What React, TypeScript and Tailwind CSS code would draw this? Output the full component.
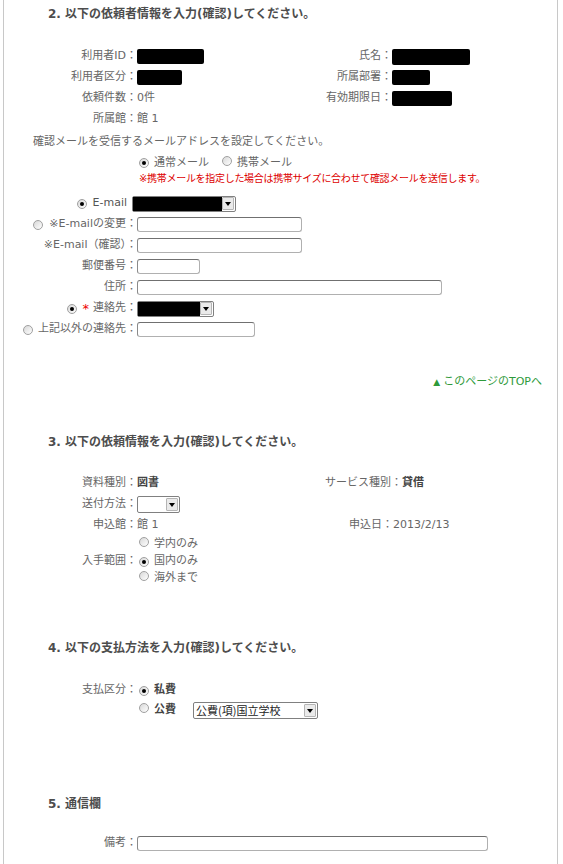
import React from "react";

const font = "font-['DejaVu_Sans','Noto_Sans_CJK_JP',sans-serif]";

function Radio({ checked = false }: { checked?: boolean }) {
  return (
    <span className="inline-flex w-[10px] h-[10px] shrink-0 items-center justify-center rounded-full border border-[#a0a0a0] bg-gradient-to-br from-[#d8d8d8] to-white">
      {checked && <span className="w-[4px] h-[4px] rounded-full bg-black" />}
    </span>
  );
}

function Arrow() {
  return (
    <span className="flex w-[12px] h-[13px] shrink-0 items-center justify-center border border-[#b5b5b5] bg-[#eaeaea] rounded-[1px] mr-[1px]">
      <span className="w-0 h-0 border-l-[3.5px] border-r-[3.5px] border-t-[4px] border-l-transparent border-r-transparent border-t-black" />
    </span>
  );
}

// redacted select: black value area + dropdown button
function BlackSelect({ w, black }: { w: string; black: string }) {
  return (
    <div className={`flex items-center h-[16px] ${w} border border-[#808080] rounded-[2px] bg-white`}>
      <div className={`h-full ${black} bg-black`} />
      <div className="flex-1" />
      <Arrow />
    </div>
  );
}

function Select({ w, text = "" }: { w: string; text?: string }) {
  return (
    <div className={`flex items-center h-[17px] ${w} border border-[#808080] rounded-[2px] bg-white`}>
      <span className="flex-1 pl-[2px] text-[11px] leading-[15px] text-[#222] font-['Noto_Sans_CJK_JP',sans-serif] whitespace-nowrap">
        {text}
      </span>
      <Arrow />
    </div>
  );
}

function TextBox({ w }: { w: string }) {
  return (
    <input
      type="text"
      className={`h-[15px] ${w} border border-[#b0b0b0] border-t-[#707070] border-l-[#8a8a8a] rounded-[3px] bg-white outline-none`}
    />
  );
}

function Black({ w, h = "h-[15px]" }: { w: string; h?: string }) {
  return <div className={`${w} ${h} bg-black rounded-[2px]`} />;
}

function Heading({ children, className = "" }: { children: React.ReactNode; className?: string }) {
  return (
    <div className={`pl-[44px] h-[18px] leading-[18px] text-[12px] font-bold text-[#4d4d4d] ${className}`}>
      {children}
    </div>
  );
}

function Label({ children, w = "w-[133px]" }: { children: React.ReactNode; w?: string }) {
  return <div className={`${w} shrink-0 flex items-center justify-end gap-[4px] whitespace-nowrap`}>{children}</div>;
}

export default function App() {
  return (
    <div className={`${font} text-[11px] text-[#666] bg-white min-h-screen`}>
      <div className="ml-[3px] w-[555px] min-h-[900px] border-x border-[#c8c8c8] pt-[5px] pb-[40px]">
        {/* 2. 依頼者情報 */}
        <Heading>2. 以下の依頼者情報を入力(確認)してください。</Heading>

        <div className="mt-[23px]">
          <div className="flex items-center h-[21px]">
            <Label>利用者ID：</Label>
            <div className="w-[113px]"><Black w="w-[67px]" /></div>
            <Label w="w-[142px]">氏名：</Label>
            <Black w="w-[78px]" h="h-[16px]" />
          </div>
          <div className="flex items-center h-[21px]">
            <Label>利用者区分：</Label>
            <div className="w-[113px]"><Black w="w-[45px]" /></div>
            <Label w="w-[142px]">所属部署：</Label>
            <Black w="w-[38px]" />
          </div>
          <div className="flex items-center h-[21px]">
            <Label>依頼件数：</Label>
            <div className="w-[113px]">0件</div>
            <Label w="w-[142px]">有効期限日：</Label>
            <Black w="w-[60px]" />
          </div>
          <div className="flex items-center h-[21px]">
            <Label>所属館：</Label>
            <div>館 1</div>
          </div>
        </div>

        <div className="mt-[4px] pl-[29px] h-[16px] leading-[16px]">確認メールを受信するメールアドレスを設定してください。</div>
        <div className="mt-[5px] pl-[135px] h-[16px] flex items-center">
          <Radio checked />
          <span className="ml-[5px]">通常メール</span>
          <span className="ml-[13px]"><Radio /></span>
          <span className="ml-[5px]">携帯メール</span>
        </div>
        <div className="pl-[135px] h-[16px] leading-[16px] text-[10px] text-[#dd0000] tracking-[-0.3px]">
          ※携帯メールを指定した場合は携帯サイズに合わせて確認メールを送信します。
        </div>

        <div className="mt-[6px]">
          <div className="flex items-center h-[21px]">
            <Label w="w-[123px]">
              <Radio checked />
              <span className="ml-[2px] text-[#555]">E-mail</span>
            </Label>
            <div className="ml-[5px]"><BlackSelect w="w-[104px]" black="w-[90px]" /></div>
          </div>
          <div className="flex items-center h-[21px]">
            <Label>
              <Radio />
              <span className="ml-[2px]">※E-mailの変更：</span>
            </Label>
            <TextBox w="w-[165px]" />
          </div>
          <div className="flex items-center h-[21px]">
            <Label>※E-mail（確認）：</Label>
            <TextBox w="w-[165px]" />
          </div>
          <div className="flex items-center h-[21px]">
            <Label>郵便番号：</Label>
            <TextBox w="w-[63px]" />
          </div>
          <div className="flex items-center h-[21px]">
            <Label>住所：</Label>
            <TextBox w="w-[305px]" />
          </div>
          <div className="flex items-center h-[21px]">
            <Label>
              <Radio checked />
              <span className="ml-[2px] text-[#ee0000] text-[13px] leading-none">*</span>
              <span>連絡先：</span>
            </Label>
            <BlackSelect w="w-[77px]" black="w-[63px]" />
          </div>
          <div className="flex items-center h-[21px]">
            <Label>
              <Radio />
              <span className="ml-[1px]">上記以外の連絡先：</span>
            </Label>
            <TextBox w="w-[118px]" />
          </div>
        </div>

        <div className="mt-[34px] h-[16px] leading-[16px] flex justify-end pr-[15px] text-[#2e9a3a]">
          <span className="text-[9px] mr-[3px]">▲</span>
          <span>このページのTOPへ</span>
        </div>

        {/* 3. 依頼情報 */}
        <Heading className="mt-[43px]">3. 以下の依頼情報を入力(確認)してください。</Heading>
        <div className="mt-[22px]">
          <div className="flex items-center h-[21px]">
            <Label>資料種別：</Label>
            <div className="w-[113px] font-bold text-[#444]">図書</div>
            <Label w="w-[152px]">サービス種別：</Label>
            <div className="font-bold text-[#444]">貸借</div>
          </div>
          <div className="flex items-center h-[21px]">
            <Label>送付方法：</Label>
            <Select w="w-[43px]" />
          </div>
          <div className="flex items-center h-[21px]">
            <Label>申込館：</Label>
            <div className="w-[113px]">館 1</div>
            <Label w="w-[143px]">申込日：</Label>
            <div>2013/2/13</div>
          </div>
          <div className="flex items-center h-[17px]">
            <Label> </Label>
            <span className="ml-[2px]"><Radio /></span>
            <span className="ml-[5px]">学内のみ</span>
          </div>
          <div className="flex items-center h-[17px]">
            <Label>入手範囲：</Label>
            <span className="ml-[2px]"><Radio checked /></span>
            <span className="ml-[5px]">国内のみ</span>
          </div>
          <div className="flex items-center h-[17px]">
            <Label> </Label>
            <span className="ml-[2px]"><Radio /></span>
            <span className="ml-[5px]">海外まで</span>
          </div>
        </div>

        {/* 4. 支払方法 */}
        <Heading className="mt-[52px]">4. 以下の支払方法を入力(確認)してください。</Heading>
        <div className="mt-[23px]">
          <div className="flex items-center h-[21px]">
            <Label>支払区分：</Label>
            <span className="ml-[2px]"><Radio checked /></span>
            <span className="ml-[5px] font-bold text-[#444]">私費</span>
          </div>
          <div className="flex items-center h-[19px]">
            <Label> </Label>
            <span className="ml-[2px]"><Radio /></span>
            <span className="ml-[5px] font-bold text-[#444]">公費</span>
            <div className="ml-[17px]"><Select w="w-[125px]" text="公費(項)国立学校" /></div>
          </div>
        </div>

        {/* 5. 通信欄 */}
        <Heading className="mt-[75px]">5. 通信欄</Heading>
        <div className="mt-[20px] flex items-center h-[21px]">
          <Label>備考：</Label>
          <TextBox w="w-[351px]" />
        </div>
      </div>
    </div>
  );
}
